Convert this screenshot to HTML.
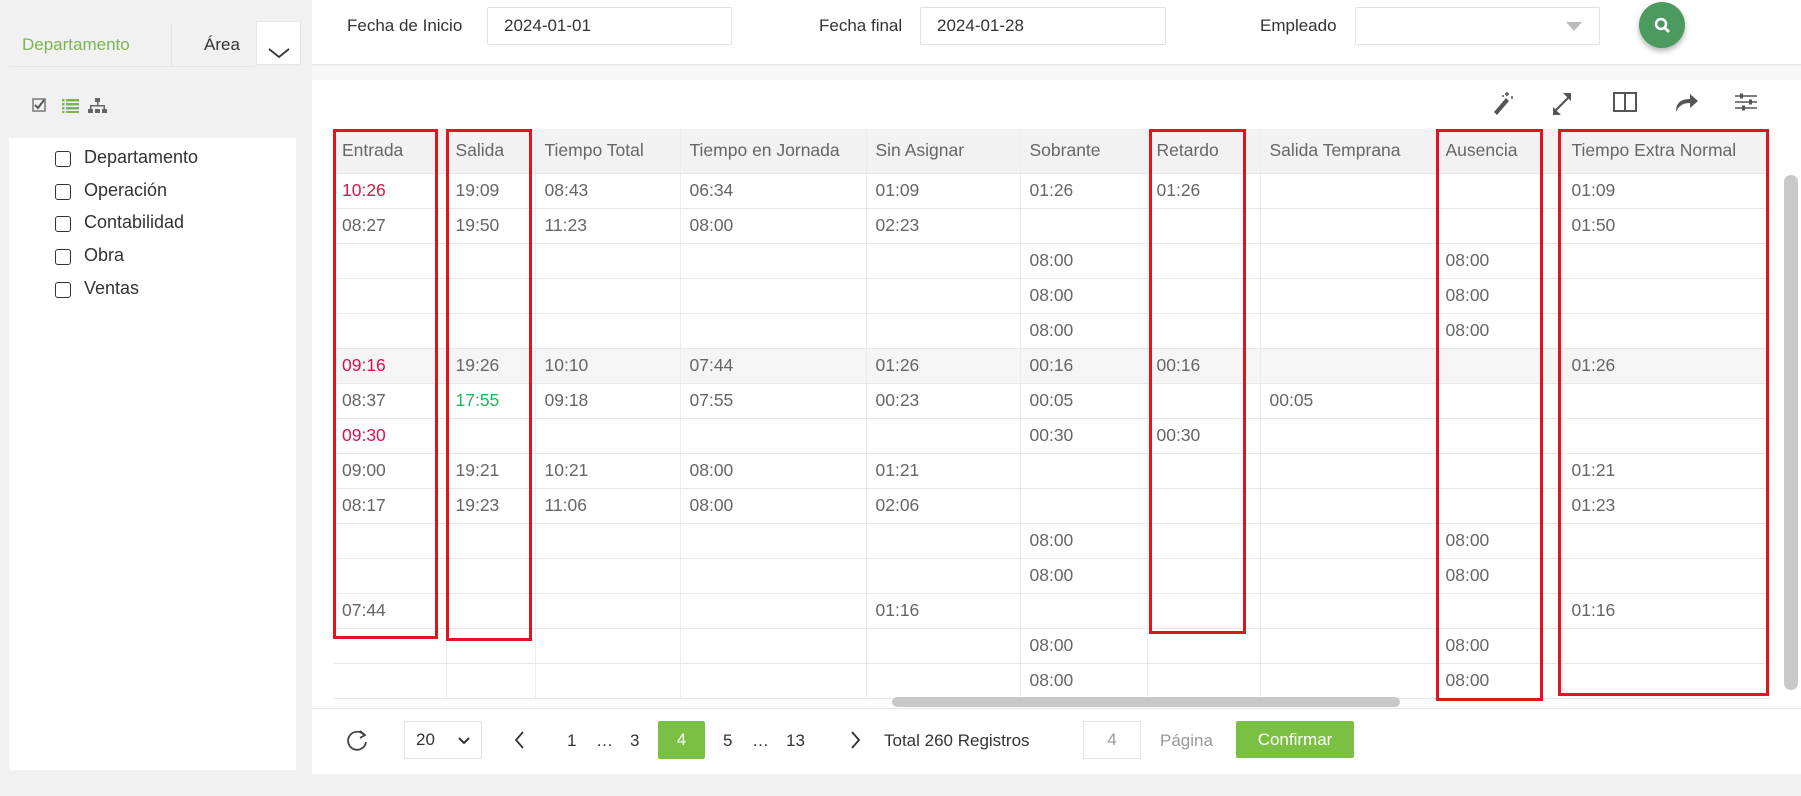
<!DOCTYPE html>
<html><head><meta charset="utf-8"><style>
*{box-sizing:border-box;margin:0;padding:0}
body{width:1801px;height:796px;background:#f2f2f2;font-family:"Liberation Sans",sans-serif;color:#555;position:relative;overflow:hidden}
.a{position:absolute}
.left{left:0;top:0;width:312px;height:796px;background:#f1f1f1}
.tab{top:23px;height:44px;font-size:17px;line-height:44px}
.list{left:9px;top:138px;width:287px;height:632px;background:#fff}
.cb{width:16px;height:16px;border:1.5px solid #333;border-radius:3px}
.it{font-size:18px;color:#333}
.top{left:312px;top:0;width:1489px;height:65px;background:#fff;border-bottom:1px solid #e6e6e6}
.lbl{font-size:17px;color:#333;top:16px}
.inp{top:7px;height:38px;border:1px solid #e2e2e2;border-radius:2px;font-size:17px;color:#333;line-height:36px;padding-left:16px;background:#fff}
.panel{left:312px;top:80px;width:1489px;height:694px;background:#fff}
table{position:absolute;left:333px;top:129px;border-collapse:collapse;font-size:17.5px;color:#666;table-layout:fixed}
td,th{height:35px;padding:0 9px;text-align:left;font-weight:normal;border-bottom:1px solid #e8e8e8;border-right:1px solid #ececec;white-space:nowrap;overflow:hidden}
th{height:44px;background:#f2f2f2;color:#666}
tr.h td{background:#f5f5f5}
.r{color:#d6164a}.g{color:#1fb35a}
.box{border:3px solid #e0141e}
.pg{font-size:17px;color:#333;top:731px}
</style></head><body>
<div class="a left"></div>
<div class="a tab" style="left:9px;width:163px;background:#f1f1f1;border-bottom:1px solid #e4e4e4;border-right:1px solid #e4e4e4;color:#7ab650;padding-left:13px">Departamento</div>
<div class="a tab" style="left:172px;width:83px;color:#333;padding-left:32px;border-bottom:1px solid #e4e4e4">Área</div>
<div class="a" style="left:256px;top:21px;width:45px;height:44px;background:#fff;border:1px solid #e8e8e8"><svg width="45" height="44"><path d="M12 27 L22 35 L32 27" stroke="#333" stroke-width="1.8" fill="none"/></svg></div>
<svg class="a" style="left:32px;top:97px" width="85" height="20">
<rect x="1" y="2" width="12" height="12" fill="none" stroke="#777" stroke-width="1.5"/><path d="M3 8 L6 11 L12 3" stroke="#555" stroke-width="2" fill="none"/>
<g fill="#7ab650"><rect x="30" y="2" width="2.5" height="2.5"/><rect x="34" y="2" width="13" height="2.5"/><rect x="30" y="6" width="2.5" height="2.5"/><rect x="34" y="6" width="13" height="2.5"/><rect x="30" y="10" width="2.5" height="2.5"/><rect x="34" y="10" width="13" height="2.5"/><rect x="30" y="14" width="2.5" height="2"/><rect x="34" y="14" width="13" height="2"/></g>
<g fill="#666"><rect x="63" y="1" width="5" height="4"/><rect x="65" y="5" width="1.5" height="4"/><rect x="58" y="8" width="15" height="1.5"/><rect x="58" y="8" width="1.5" height="4"/><rect x="71.5" y="8" width="1.5" height="4"/><rect x="56" y="12" width="5" height="4"/><rect x="63" y="12" width="5" height="4"/><rect x="70" y="12" width="5" height="4"/></g>
</svg>
<div class="a list"></div>
<div class="a cb" style="left:55px;top:151px"></div><div class="a it" style="left:84px;top:147px">Departamento</div>
<div class="a cb" style="left:55px;top:184px"></div><div class="a it" style="left:84px;top:180px">Operación</div>
<div class="a cb" style="left:55px;top:216px"></div><div class="a it" style="left:84px;top:212px">Contabilidad</div>
<div class="a cb" style="left:55px;top:249px"></div><div class="a it" style="left:84px;top:245px">Obra</div>
<div class="a cb" style="left:55px;top:282px"></div><div class="a it" style="left:84px;top:278px">Ventas</div>

<div class="a top"></div>
<div class="a" style="left:312px;top:66px;width:1489px;height:14px;background:#f7f7f7"></div>
<div class="a lbl" style="left:347px">Fecha de Inicio</div>
<div class="a inp" style="left:487px;width:245px">2024-01-01</div>
<div class="a lbl" style="left:819px">Fecha final</div>
<div class="a inp" style="left:920px;width:246px">2024-01-28</div>
<div class="a lbl" style="left:1260px">Empleado</div>
<div class="a inp" style="left:1355px;width:245px"><svg class="a" style="left:210px;top:14px" width="16" height="10"><path d="M0 0 H16 L8 9Z" fill="#bbb"/></svg></div>
<div class="a" style="left:1639px;top:2px;width:46px;height:46px;border-radius:50%;background:#4b9a60;box-shadow:0 3px 6px rgba(0,0,0,.3)"><svg width="46" height="46"><circle cx="22" cy="22" r="5" stroke="#fff" stroke-width="2.5" fill="none"/><path d="M26 26 L30 30" stroke="#fff" stroke-width="3"/></svg></div>

<div class="a panel"></div>
<svg class="a" style="left:1490px;top:88px" width="280" height="28" fill="#555">
<path d="M4 24 L16 10 L19 13 L7 27Z"/><path d="M17 4 v4 M15 6 h4 M22 8 v3 M12 8 h2" stroke="#555" stroke-width="1.5"/>
<path d="M64 24 L80 8" stroke="#555" stroke-width="2.2"/><path d="M81 5 v8 l-8 -8z M63 27 v-8 l8 8z"/>
<rect x="124" y="5" width="22" height="18" fill="none" stroke="#555" stroke-width="2"/><path d="M135 5 v18" stroke="#555" stroke-width="2"/>
<path d="M186 24 C186 14 192 11 200 11 V6 L208 13 L200 20 V15 C194 15 189 17 186 24Z"/>
<path d="M245 8 h22 M245 14 h22 M245 20 h22" stroke="#555" stroke-width="1.5"/><rect x="250" y="5.5" width="3" height="5"/><rect x="259" y="11.5" width="3" height="5"/><rect x="252" y="17.5" width="3" height="5"/>
</svg>

<table>
<colgroup><col style="width:113px"><col style="width:89px"><col style="width:145px"><col style="width:186px"><col style="width:154px"><col style="width:127px"><col style="width:113px"><col style="width:176px"><col style="width:126px"><col style="width:207px"></colgroup>
<tr><th>Entrada</th><th>Salida</th><th>Tiempo Total</th><th>Tiempo en Jornada</th><th>Sin Asignar</th><th>Sobrante</th><th>Retardo</th><th>Salida Temprana</th><th>Ausencia</th><th>Tiempo Extra Normal</th></tr>
<tr><td class="r">10:26</td><td>19:09</td><td>08:43</td><td>06:34</td><td>01:09</td><td>01:26</td><td>01:26</td><td></td><td></td><td>01:09</td></tr>
<tr><td>08:27</td><td>19:50</td><td>11:23</td><td>08:00</td><td>02:23</td><td></td><td></td><td></td><td></td><td>01:50</td></tr>
<tr><td></td><td></td><td></td><td></td><td></td><td>08:00</td><td></td><td></td><td>08:00</td><td></td></tr>
<tr><td></td><td></td><td></td><td></td><td></td><td>08:00</td><td></td><td></td><td>08:00</td><td></td></tr>
<tr><td></td><td></td><td></td><td></td><td></td><td>08:00</td><td></td><td></td><td>08:00</td><td></td></tr>
<tr class="h"><td class="r">09:16</td><td>19:26</td><td>10:10</td><td>07:44</td><td>01:26</td><td>00:16</td><td>00:16</td><td></td><td></td><td>01:26</td></tr>
<tr><td>08:37</td><td class="g">17:55</td><td>09:18</td><td>07:55</td><td>00:23</td><td>00:05</td><td></td><td>00:05</td><td></td><td></td></tr>
<tr><td class="r">09:30</td><td></td><td></td><td></td><td></td><td>00:30</td><td>00:30</td><td></td><td></td><td></td></tr>
<tr><td>09:00</td><td>19:21</td><td>10:21</td><td>08:00</td><td>01:21</td><td></td><td></td><td></td><td></td><td>01:21</td></tr>
<tr><td>08:17</td><td>19:23</td><td>11:06</td><td>08:00</td><td>02:06</td><td></td><td></td><td></td><td></td><td>01:23</td></tr>
<tr><td></td><td></td><td></td><td></td><td></td><td>08:00</td><td></td><td></td><td>08:00</td><td></td></tr>
<tr><td></td><td></td><td></td><td></td><td></td><td>08:00</td><td></td><td></td><td>08:00</td><td></td></tr>
<tr><td>07:44</td><td></td><td></td><td></td><td>01:16</td><td></td><td></td><td></td><td></td><td>01:16</td></tr>
<tr><td></td><td></td><td></td><td></td><td></td><td>08:00</td><td></td><td></td><td>08:00</td><td></td></tr>
<tr><td></td><td></td><td></td><td></td><td></td><td>08:00</td><td></td><td></td><td>08:00</td><td></td></tr>
</table>
<div class="a" style="left:1784px;top:175px;width:14px;height:515px;background:#c8c8c8;border-radius:7px"></div>
<div class="a" style="left:892px;top:697px;width:508px;height:10px;background:#c8c8c8;border-radius:5px"></div>
<div class="a" style="left:312px;top:708px;width:1489px;height:1px;background:#e6e6e6"></div>

<div class="a box" style="left:333px;top:129px;width:105px;height:510px"></div>
<div class="a box" style="left:446px;top:129px;width:86px;height:512px"></div>
<div class="a box" style="left:1149px;top:129px;width:97px;height:505px"></div>
<div class="a box" style="left:1436px;top:129px;width:107px;height:572px"></div>
<div class="a box" style="left:1558px;top:129px;width:211px;height:567px"></div>

<svg class="a" style="left:344px;top:728px" width="26" height="26"><path d="M20 7 A9 9 0 1 0 22 14" stroke="#444" stroke-width="1.8" fill="none"/><path d="M16 3 L21 7 L16 10" stroke="#444" stroke-width="1.8" fill="none"/></svg>
<div class="a" style="left:404px;top:721px;width:78px;height:38px;border:1px solid #e2e2e2;border-radius:2px;font-size:17px;color:#333;line-height:36px;padding-left:11px">20<svg class="a" style="left:53px;top:15px" width="12" height="8"><path d="M1 1 L6 6 L11 1" stroke="#333" stroke-width="2" fill="none"/></svg></div>
<svg class="a" style="left:513px;top:730px" width="14" height="20"><path d="M10 2 L3 10 L10 18" stroke="#333" stroke-width="1.8" fill="none"/></svg>
<div class="a pg" style="left:567px">1</div><div class="a pg" style="left:596px">…</div><div class="a pg" style="left:630px">3</div>
<div class="a" style="left:658px;top:721px;width:47px;height:38px;background:#7ac143;border-radius:2px;color:#fff;font-size:17px;text-align:center;line-height:38px">4</div>
<div class="a pg" style="left:723px">5</div><div class="a pg" style="left:752px">…</div><div class="a pg" style="left:786px">13</div>
<svg class="a" style="left:848px;top:730px" width="14" height="20"><path d="M4 2 L11 10 L4 18" stroke="#333" stroke-width="1.8" fill="none"/></svg>
<div class="a pg" style="left:884px">Total 260 Registros</div>
<div class="a" style="left:1083px;top:721px;width:58px;height:38px;border:1px solid #e2e2e2;border-radius:2px;font-size:17px;color:#999;line-height:36px;text-align:center">4</div>
<div class="a pg" style="left:1160px;color:#999">Página</div>
<div class="a" style="left:1236px;top:721px;width:118px;height:37px;background:#7ac143;border-radius:2px;color:#fff;font-size:17px;text-align:center;line-height:37px">Confirmar</div>
</body></html>
